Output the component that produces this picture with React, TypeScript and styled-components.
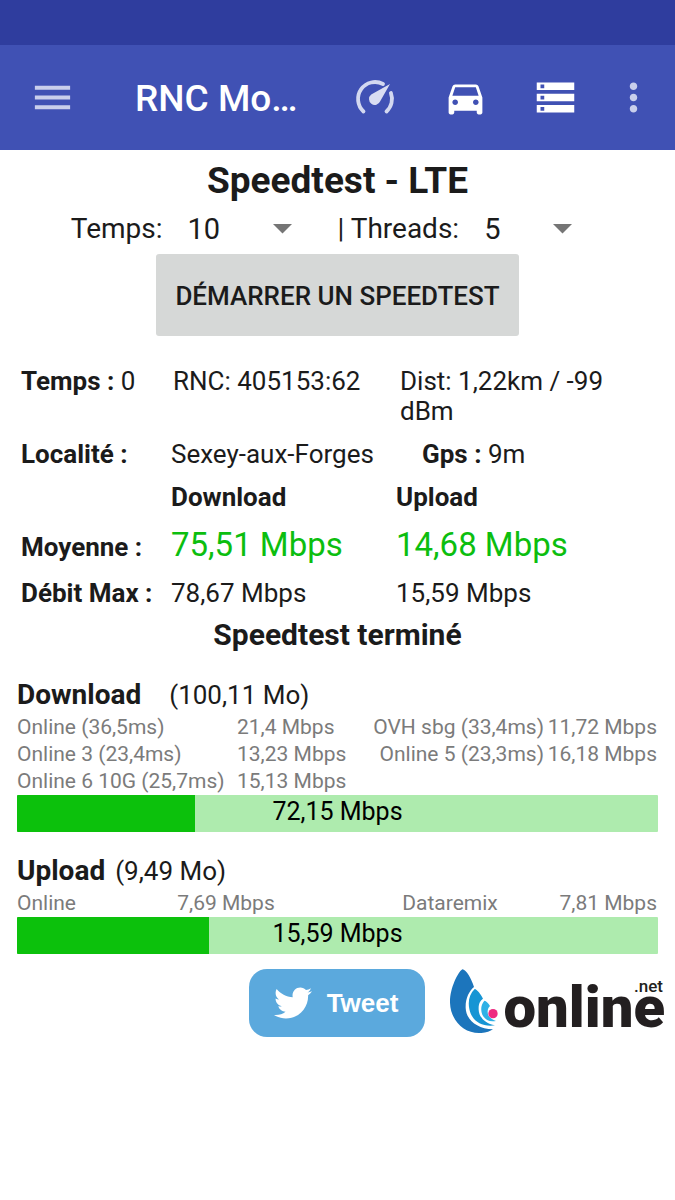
import React from "react";
import styled, { createGlobalStyle } from "styled-components";
import { MdDirectionsCar, MdMenu, MdMoreVert, MdStorage } from "react-icons/md";
import { FaTwitter } from "react-icons/fa";

const GlobalStyle = createGlobalStyle`
  *, *::before, *::after { box-sizing: border-box; }
  body {
    margin: 0;
    background: #fff;
    color: #1b1b1b;
    font-family: Roboto, "Noto Sans", sans-serif;
    font-size: 26px;
    line-height: 30px;
  }
`;

const StatusBar = styled.div`
  height: 45px;
  background: #2f3d9e;
`;

const AppBar = styled.header`
  display: flex;
  align-items: center;
  height: 105px;
  padding-right: 8px;
  background: #4051b4;
  color: #fff;
`;

const IconButton = styled.button<{ $width: number; $dim?: boolean }>`
  display: flex;
  flex: none;
  align-items: center;
  justify-content: center;
  width: ${(p) => p.$width}px;
  height: 105px;
  padding: 0;
  border: 0;
  background: none;
  color: ${(p) => (p.$dim ? "#c9cfec" : "#fff")};
`;

const AppTitle = styled.h1`
  flex: 1;
  min-width: 0;
  margin: 0;
  padding: 2px 24px 0 30px;
  overflow: hidden;
  font-size: 37px;
  font-weight: 500;
  line-height: 44px;
  white-space: nowrap;
`;

const Main = styled.main`
  padding: 9px 17px 24px;
`;

const PageTitle = styled.h2`
  margin: 0;
  font-size: 37px;
  font-weight: 700;
  line-height: 44px;
  text-align: center;
`;

const Options = styled.div`
  display: flex;
  align-items: center;
  justify-content: center;
  height: 51px;
  font-size: 28px;
`;

const OptionLabel = styled.label`
  white-space: pre;
`;

const SelectBox = styled.span<{ $width: number }>`
  position: relative;
  width: ${(p) => p.$width}px;
  margin: 0 32px 0 25px;
`;

const Select = styled.select`
  display: block;
  width: 100%;
  padding: 0;
  border: 0;
  appearance: none;
  background: none;
  color: inherit;
  font: inherit;
  font-size: 29px;
`;

const Caret = styled.svg`
  position: absolute;
  top: 50%;
  right: 0;
  transform: translateY(-50%);
  pointer-events: none;
`;

const StartButton = styled.button`
  display: block;
  height: 82px;
  margin: 0 auto;
  padding: 2px 19px 0;
  border: 0;
  border-radius: 3px;
  background: #d6d8d7;
  color: #1b1b1b;
  font: 500 26px/30px Roboto, sans-serif;
  text-transform: uppercase;
`;

const Info = styled.section`
  display: grid;
  row-gap: 13px;
  margin-top: 30px;
  padding-left: 4px;
`;

const InfoRow = styled.div<{ $inset: number }>`
  display: grid;
  grid-template-columns: 150px 225px 1fr;

  > :nth-child(2) { padding-left: ${(p) => (p.$inset ? 2 : 0)}px; }
  > :nth-child(3) { padding: 0 24px 0 ${(p) => p.$inset}px; }
`;

const InfoRowGps = styled(InfoRow)`
  grid-template-columns: 150px 251px 1fr;
`;

const Results = styled.table`
  width: 100%;
  margin: 13px 0 0 4px;
  border-collapse: collapse;
  table-layout: fixed;

  th, td { padding: 0 0 13px; text-align: left; vertical-align: baseline; }
  tbody tr:last-child > * { padding-bottom: 0; }
`;

const Average = styled.td`
  color: #0cbe0f;
  font-size: 33px;
  line-height: 40px;
`;

const Status = styled.p`
  margin: 9px 0 0;
  font-size: 30px;
  font-weight: 700;
  line-height: 36px;
  text-align: center;
`;

const Transfer = styled.section<{ $top: number }>`
  margin-top: ${(p) => p.$top}px;
`;

const TransferHead = styled.div<{ $gap: number }>`
  display: flex;
  align-items: baseline;
  gap: ${(p) => p.$gap}px;
  margin-bottom: 2px;
  font-size: 26px;
  line-height: 34px;
`;

const TransferTitle = styled.h3`
  margin: 0;
  font-size: 28px;
  font-weight: 700;
`;

const Servers = styled.table`
  width: 100%;
  border-collapse: collapse;
  table-layout: fixed;
  color: #7b7b7b;
  font-size: 21px;
  line-height: 27px;
  white-space: nowrap;

  td { padding: 0; }
  td:nth-child(n + 3) { text-align: right; }
  td:last-child { padding-right: 1px; }
`;

const Meter = styled.div`
  position: relative;
  height: 37px;
  overflow: hidden;
  border-radius: 1px;
  background: #aeebae;
  color: #000;
  font-size: 25px;
  line-height: 34px;
  text-align: center;
`;

const MeterFill = styled.div`
  position: absolute;
  inset: 0 auto 0 0;
  background: #0cc10c;
`;

const MeterText = styled.span`
  position: relative;
`;

const Footer = styled.footer`
  display: flex;
  justify-content: flex-end;
  gap: 24px;
  margin: 15px -7px 0 0;
`;

const TweetButton = styled.button`
  display: flex;
  align-items: center;
  gap: 15px;
  height: 68px;
  padding: 0 27px 0 25px;
  border: 0;
  border-radius: 18px;
  background: #5ba9dd;
  color: #fff;
  font: 700 26px/31px "Liberation Sans", Arial, sans-serif;
`;

const Sponsor = styled.a`
  position: relative;
  display: flex;
  color: #231f20;
  text-decoration: none;
`;

const Wordmark = styled.span`
  margin-left: 4px;
  font-size: 58px;
  font-weight: 900;
  line-height: 76px;
`;

const Suffix = styled.span`
  position: absolute;
  top: 7px;
  right: 2px;
  font-size: 17px;
  font-weight: 500;
  line-height: 20px;
`;

function Gauge() {
  return (
    <svg width="46" height="46" viewBox="0 0 46 46" fill="none" aria-hidden="true">
      <path
        d="M11.5 36.5A17 17 0 0 1 31 9M38.9 18A17 17 0 0 1 34.5 36.5"
        stroke="#d3d8f0"
        strokeWidth="3.8"
        strokeLinecap="round"
      />
      <path d="M38 9L28.2 26.3A5.8 5.8 0 1 1 19.2 19.6Z" fill="#d9ddf2" />
    </svg>
  );
}

function DropLogo() {
  return (
    <svg width="50" height="68" viewBox="28 26 150 204" aria-hidden="true">
      <path
        fill="#1c75bc"
        d="M68 27C55 35 30 85 31 127C33 182 75 222 125 218C140 217 152 213 160 207C110 206 79 176 78 143C77 115 88 92 103 80C95 55 80 28 68 27Z"
      />
      <path
        fill="#1795d4"
        d="M105 86C90 100 84 122 89 146C96 182 127 201 166 195C135 189 118 170 117 148C116 130 122 121 130 115C122 100 112 87 105 86Z"
      />
      <path
        fill="#2eb1e6"
        d="M134 121C124 132 122 150 128 163C136 179 150 186 169 182C151 176 143 165 144 152C145 144 147 141 151 137C146 128 140 122 134 121Z"
      />
      <circle cx="160" cy="160" r="14" fill="#ee2a7f" />
    </svg>
  );
}

function Dropdown({ id, values, width }: { id: string; values: string[]; width: number }) {
  return (
    <SelectBox $width={width}>
      <Select id={id} defaultValue={values[0]}>
        {values.map((v) => (
          <option key={v}>{v}</option>
        ))}
      </Select>
      <Caret width="19" height="10" viewBox="0 0 19 10" aria-hidden="true">
        <path d="M0 0H19L9.5 9.5Z" fill="#757575" />
      </Caret>
    </SelectBox>
  );
}

function ServerTable({ widths, rows }: { widths: string[]; rows: string[][] }) {
  return (
    <Servers>
      <colgroup>
        {widths.map((w, i) => (
          <col key={i} style={{ width: w }} />
        ))}
      </colgroup>
      <tbody>
        {rows.map((row) => (
          <tr key={row[0]}>
            {row.map((cell, i) => (
              <td key={i}>{cell}</td>
            ))}
          </tr>
        ))}
      </tbody>
    </Servers>
  );
}

function SpeedMeter({ percent, label }: { percent: number; label: string }) {
  return (
    <Meter>
      <MeterFill style={{ width: `${percent}%` }} />
      <MeterText>{label}</MeterText>
    </Meter>
  );
}

const downloadServers = [
  ["Online (36,5ms)", "21,4 Mbps", "OVH sbg (33,4ms)", "11,72 Mbps"],
  ["Online 3 (23,4ms)", "13,23 Mbps", "Online 5 (23,3ms)", "16,18 Mbps"],
  ["Online 6 10G (25,7ms)", "15,13 Mbps", "", ""],
];

const uploadServers = [["Online", "7,69 Mbps", "Dataremix", "7,81 Mbps"]];

export default function App() {
  return (
    <>
      <GlobalStyle />
      <StatusBar />
      <AppBar>
        <IconButton $width={105} $dim aria-label="Menu">
          <MdMenu size={47} />
        </IconButton>
        <AppTitle>RNC Mo…</AppTitle>
        <IconButton $width={90} aria-label="Speedtest">
          <Gauge />
        </IconButton>
        <IconButton $width={90} aria-label="Drive">
          <MdDirectionsCar size={45} />
        </IconButton>
        <IconButton $width={90} aria-label="Logs">
          <MdStorage size={45} />
        </IconButton>
        <IconButton $width={67} $dim aria-label="Plus">
          <MdMoreVert size={45} />
        </IconButton>
      </AppBar>
      <Main>
        <PageTitle>Speedtest - LTE</PageTitle>
        <Options>
          <OptionLabel htmlFor="duration">Temps:</OptionLabel>
          <Dropdown id="duration" values={["10", "20", "30"]} width={104} />
          <OptionLabel htmlFor="threads">{"  | Threads:"}</OptionLabel>
          <Dropdown id="threads" values={["5", "3", "1"]} width={88} />
        </Options>
        <StartButton>Démarrer un speedtest</StartButton>

        <Info>
          <InfoRow $inset={4}>
            <span>
              <b>Temps :</b> 0
            </span>
            <span>RNC: 405153:62</span>
            <span>Dist: 1,22km / -99 dBm</span>
          </InfoRow>
          <InfoRowGps $inset={0}>
            <b>Localité :</b>
            <span>Sexey-aux-Forges</span>
            <span>
              <b>Gps :</b> 9m
            </span>
          </InfoRowGps>
        </Info>

        <Results>
          <colgroup>
            <col style={{ width: "150px" }} />
            <col style={{ width: "225px" }} />
            <col />
          </colgroup>
          <thead>
            <tr>
              <td />
              <th scope="col">Download</th>
              <th scope="col">Upload</th>
            </tr>
          </thead>
          <tbody>
            <tr>
              <th scope="row">Moyenne :</th>
              <Average>75,51 Mbps</Average>
              <Average>14,68 Mbps</Average>
            </tr>
            <tr>
              <th scope="row">Débit Max :</th>
              <td>78,67 Mbps</td>
              <td>15,59 Mbps</td>
            </tr>
          </tbody>
        </Results>
        <Status>Speedtest terminé</Status>

        <Transfer $top={25}>
          <TransferHead $gap={28}>
            <TransferTitle>Download</TransferTitle>
            <span>(100,11 Mo)</span>
          </TransferHead>
          <ServerTable widths={["220px", "auto", "27%", "114px"]} rows={downloadServers} />
          <SpeedMeter percent={27.8} label="72,15 Mbps" />
        </Transfer>

        <Transfer $top={22}>
          <TransferHead $gap={10}>
            <TransferTitle>Upload</TransferTitle>
            <span>(9,49 Mo)</span>
          </TransferHead>
          <ServerTable widths={["25%", "25%", "25%", "25%"]} rows={uploadServers} />
          <SpeedMeter percent={30} label="15,59 Mbps" />
        </Transfer>

        <Footer>
          <TweetButton>
            <FaTwitter size={38} />
            Tweet
          </TweetButton>
          <Sponsor href="#online">
            <DropLogo />
            <Wordmark>online</Wordmark>
            <Suffix>.net</Suffix>
          </Sponsor>
        </Footer>
      </Main>
    </>
  );
}
